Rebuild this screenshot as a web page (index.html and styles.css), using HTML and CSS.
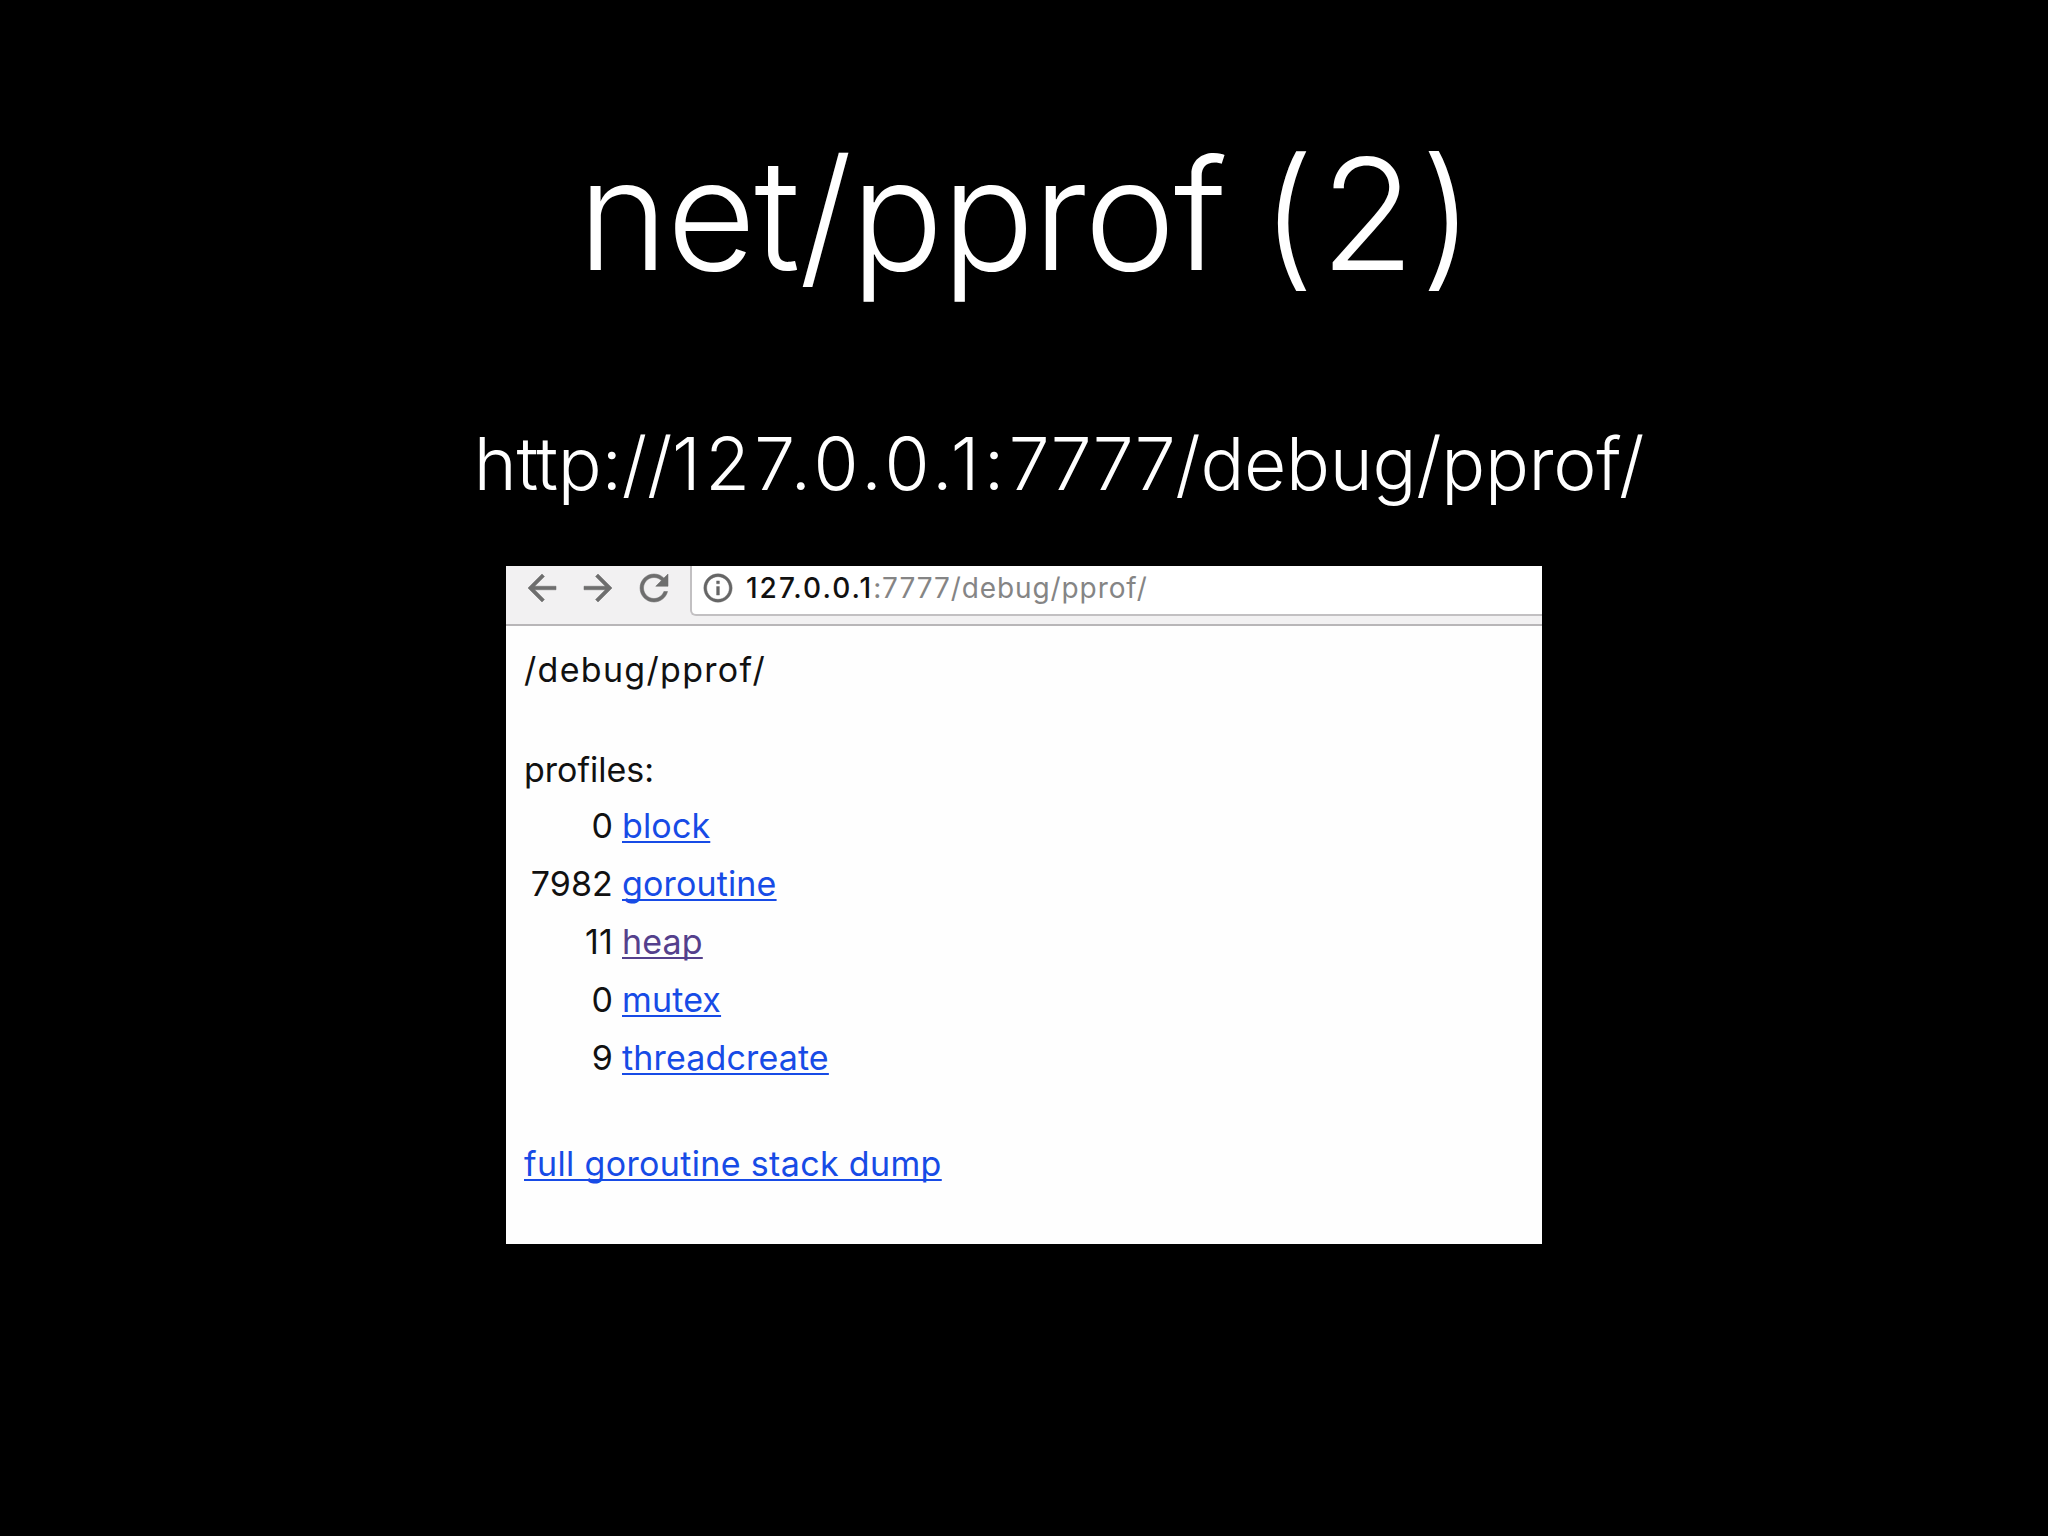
FILE: index.html
```html
<!DOCTYPE html>
<html lang="en">
<head>
    <meta charset="UTF-8">
    <meta name="viewport" content="width=device-width, initial-scale=1.0">
    <title>net/pprof (2)</title>
    <link rel="stylesheet" href="styles.css">
</head>
<body>
    <div class="slide">
        <h1>net/pprof <span class="number">(2)</span></h1>
        <h2>http://<span class="ip">127.0.0.1:</span>7777/debug/pprof/</h2>
        <div class="browser">
            <div class="toolbar">
                <svg class="icon" viewBox="0 0 24 24"><path d="M20 11H7.83l5.59-5.59L12 4l-8 8 8 8 1.41-1.41L7.83 13H20v-2z"/></svg>
                <svg class="icon" viewBox="0 0 24 24"><path d="M12 4l-1.41 1.41L16.17 11H4v2h12.17l-5.58 5.59L12 20l8-8z"/></svg>
                <svg class="icon" viewBox="0 0 24 24"><path d="M17.65 6.35C16.2 4.9 14.21 4 12 4c-4.42 0-7.99 3.58-7.99 8s3.57 8 7.99 8c3.73 0 6.84-2.55 7.73-6h-2.08c-.82 2.33-3.04 4-5.65 4-3.31 0-6-2.69-6-6s2.69-6 6-6c1.66 0 3.14.69 4.22 1.78L13 11h7V4l-2.35 2.35z"/></svg>
                <div class="address">
                    <svg class="info" viewBox="0 0 24 24"><path d="M11 17h2v-6h-2v6zm1-15C6.48 2 2 6.48 2 12s4.48 10 10 10 10-4.48 10-10S17.52 2 12 2zm0 18c-4.41 0-8-3.59-8-8s3.59-8 8-8 8 3.59 8 8-3.59 8-8 8zM11 9h2V7h-2v2z"/></svg>
                    <div class="url"><span class="host">127.0.0.1</span><span class="path">:7777/debug/pprof/</span></div>
                </div>
            </div>
            <div class="page">
                <p class="title">/debug/pprof/</p>
                <p class="label">profiles:</p>
                <div class="profiles">
                    <span>0</span><a href="#">block</a>
                    <span>7982</span><a href="#">goroutine</a>
                    <span>11</span><a href="#" class="visited">heap</a>
                    <span>0</span><a href="#">mutex</a>
                    <span>9</span><a href="#">threadcreate</a>
                </div>
                <p class="dump"><a href="#">full goroutine stack dump</a></p>
            </div>
        </div>
    </div>
</body>
</html>
```
FILE: styles.css
```css
body {
    margin: 0;
    background-color: #000;
    font-family: Inter, "Liberation Sans", sans-serif;
    font-feature-settings: "calt" 0;
}

.slide {
    display: flex;
    flex-direction: column;
    align-items: center;
    box-sizing: border-box;
    width: 2048px;
    height: 1536px;
    padding-top: 114px;
    overflow: hidden;
}

h1, h2 {
    margin: 0;
    color: #fff;
    font-weight: 300;
    white-space: nowrap;
}

h1 {
    padding-left: 9px;
    font-size: 154px;
    line-height: 200px;
    letter-spacing: -1.6px;
    word-spacing: -6px;
}

.number {
    letter-spacing: 5.5px;
}

h2 {
    margin: 105px 0 57px 70px;
    font-size: 73px;
    line-height: 90px;
    letter-spacing: -0.3px;
}

.ip {
    letter-spacing: 4.4px;
}

.browser {
    width: 1036px;
    height: 678px;
    background-color: #fefefe;
    overflow: hidden;
    flex: none;
}

.toolbar {
    display: flex;
    box-sizing: border-box;
    height: 60px;
    padding-left: 15px;
    gap: 14px;
    background-color: #f2f1f2;
    border-bottom: 2px solid #b8b6b8;
}

.icon {
    flex: none;
    width: 42px;
    height: 42px;
    margin-top: 1px;
    fill: #6e6e6e;
    stroke: #6e6e6e;
    stroke-width: 0.3px;
}

.address {
    display: flex;
    flex: 1;
    box-sizing: border-box;
    height: 50px;
    margin-left: 1px;
    padding-left: 9px;
    background-color: #fff;
    border: solid #c2c0c2;
    border-width: 0 0 2px 2px;
    border-bottom-left-radius: 6px;
}

.info {
    flex: none;
    width: 34px;
    height: 34px;
    margin: 5px 11px 0 0;
    fill: #666;
    stroke: #666;
    stroke-width: 0.3px;
}

.url {
    font-size: 28px;
    line-height: 44px;
    white-space: nowrap;
}

.host {
    color: #111;
    font-weight: 500;
    letter-spacing: 2px;
}

.path {
    color: #858585;
    letter-spacing: 0.9px;
}

.page {
    padding: 19px 18px;
    color: #111;
    font-size: 34px;
}

p {
    margin: 0;
    line-height: 50px;
}

.title {
    letter-spacing: 1.3px;
}

.label {
    margin: 50px 0 2px;
}

.profiles {
    display: grid;
    grid-template-columns: 89px auto;
    column-gap: 9px;
    justify-content: start;
    justify-items: start;
    line-height: 58px;
    letter-spacing: 0.15px;
}

.profiles span {
    justify-self: end;
}

.dump {
    margin-top: 52px;
    letter-spacing: 0.35px;
}

a {
    color: #174be6;
    text-decoration-thickness: 2px;
    text-underline-offset: 3px;
    text-decoration-skip-ink: none;
}

.visited {
    color: #54408c;
}
```
